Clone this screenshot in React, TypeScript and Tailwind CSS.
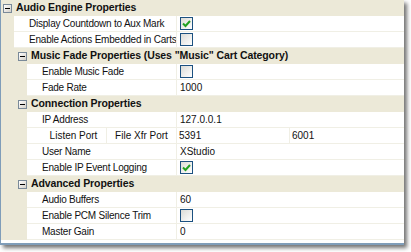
import React from 'react';

type Row =
  | { kind: 'cat'; label: string; nested?: boolean }
  | { kind: 'prop'; label: string; value?: string; check?: boolean; nested?: boolean }
  | { kind: 'split'; a: string; b: string; va: string; vb: string };

const rows: Row[] = [
  { kind: 'cat', label: 'Audio Engine Properties' },
  { kind: 'prop', label: 'Display Countdown to Aux Mark', check: true },
  { kind: 'prop', label: 'Enable Actions Embedded in Carts', check: false },
  { kind: 'cat', label: 'Music Fade Properties (Uses "Music" Cart Category)', nested: true },
  { kind: 'prop', label: 'Enable Music Fade', check: false, nested: true },
  { kind: 'prop', label: 'Fade Rate', value: '1000', nested: true },
  { kind: 'cat', label: 'Connection Properties', nested: true },
  { kind: 'prop', label: 'IP Address', value: '127.0.0.1', nested: true },
  { kind: 'split', a: 'Listen Port', b: 'File Xfr Port', va: '5391', vb: '6001' },
  { kind: 'prop', label: 'User Name', value: 'XStudio', nested: true },
  { kind: 'prop', label: 'Enable IP Event Logging', check: true, nested: true },
  { kind: 'cat', label: 'Advanced Properties', nested: true },
  { kind: 'prop', label: 'Audio Buffers', value: '60', nested: true },
  { kind: 'prop', label: 'Enable PCM Silence Trim', check: false, nested: true },
  { kind: 'prop', label: 'Master Gain', value: '0', nested: true },
];

const MinusBox: React.FC = () => (
  <span className="flex h-[9px] w-[9px] shrink-0 items-center justify-center border border-[#7a8a99] bg-gradient-to-br from-white to-[#d4d0c8]">
    <span className="h-px w-[5px] bg-black" />
  </span>
);

const CheckBox: React.FC<{ checked: boolean }> = ({ checked }) => (
  <span className="flex h-[13px] w-[13px] items-center justify-center border border-[#1c5180] bg-gradient-to-br from-[#dcdcd7] to-white">
    {checked && (
      <svg width="9" height="9" viewBox="0 0 9 9">
        <path d="M1 4.5 L3.5 7 L8 2" fill="none" stroke="#21a121" strokeWidth="2" />
      </svg>
    )}
  </span>
);

const App: React.FC = () => {
  return (
    <div className="h-[252px] w-[411px] whitespace-nowrap bg-white font-['Liberation_Sans',Arial,sans-serif] text-[10px] text-[#111]">
      <div className="w-[404px] border-b-2 border-l border-[#7f9db9] bg-white pb-[3px] shadow-[3px_3px_4px_rgba(0,0,0,0.55)]">
        {rows.map((row, i) => {
          if (row.kind === 'cat') {
            return (
              <div key={i} className="flex h-4 items-center bg-[#ece9d8]">
                <div className={row.nested ? 'w-[17px] shrink-0' : 'w-[2px] shrink-0'} />
                <MinusBox />
                <span className="ml-[4px] text-[10.5px] font-bold tracking-[-0.1px]">{row.label}</span>
              </div>
            );
          }
          if (row.kind === 'split') {
            return (
              <div key={i} className="flex h-4">
                <div className="w-[26px] shrink-0 bg-[#ece9d8]" />
                <div className="flex w-[80px] shrink-0 items-center justify-center border-b border-r border-[#f0efe5] pl-[14px]">
                  {row.a}
                </div>
                <div className="flex w-[70px] shrink-0 items-center justify-center border-b border-r border-[#f0efe5]">
                  {row.b}
                </div>
                <div className="flex w-[113px] shrink-0 items-center border-b border-r border-[#f0efe5] pl-[2px]">
                  {row.va}
                </div>
                <div className="flex flex-1 items-center border-b border-[#f0efe5] pl-[2px]">{row.vb}</div>
              </div>
            );
          }
          return (
            <div key={i} className="flex h-4">
              <div className={`${row.nested ? 'w-[26px]' : 'w-[13px]'} shrink-0 bg-[#ece9d8]`} />
              <div
                className={`${row.nested ? 'w-[150px]' : 'w-[163px]'} flex shrink-0 items-center overflow-hidden border-b border-r border-[#f0efe5] pl-[15px] tracking-[-0.22px]`}
              >
                {row.label}
              </div>
              <div className="flex flex-1 items-center border-b border-[#f0efe5] pl-[3px]">
                {row.check !== undefined ? <CheckBox checked={row.check} /> : row.value}
              </div>
            </div>
          );
        })}
      </div>
    </div>
  );
};

export default App;
